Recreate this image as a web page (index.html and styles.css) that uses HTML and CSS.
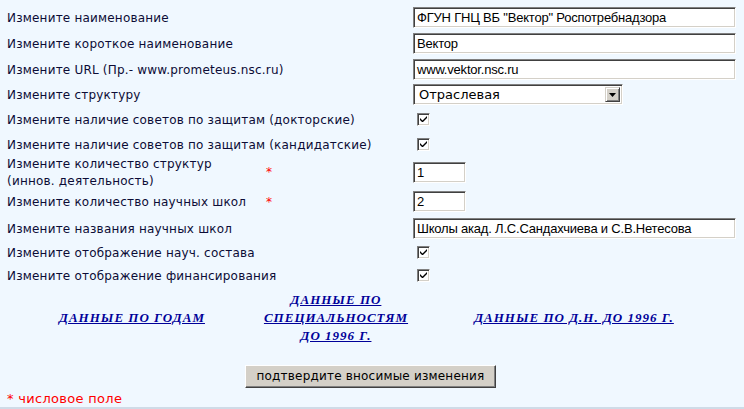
FILE: index.html
```html
<!DOCTYPE html>
<html lang="ru">
<head>
<meta charset="utf-8">
<title>Изменение данных</title>
<link rel="stylesheet" href="styles.css">
</head>
<body>
<form class="form">
  <div class="grid">
    <div class="lbl">Измените наименование</div><div class="req"></div>
    <div class="fld"><span class="inp wide">ФГУН ГНЦ ВБ "Вектор" Роспотребнадзора</span></div>

    <div class="lbl">Измените короткое наименование</div><div class="req"></div>
    <div class="fld"><span class="inp wide">Вектор</span></div>

    <div class="lbl">Измените URL (Пр.- www.prometeus.nsc.ru)</div><div class="req"></div>
    <div class="fld"><span class="inp wide">www.vektor.nsc.ru</span></div>

    <div class="lbl">Измените структуру</div><div class="req"></div>
    <div class="fld"><span class="sel"><span class="sel-text">Отраслевая</span><span class="sel-btn"><svg width="7" height="4" viewBox="0 0 7 4"><path d="M0 0h7L3.5 4z" fill="#000"/></svg></span></span></div>

    <div class="lbl">Измените наличие советов по защитам (докторские)</div><div class="req"></div>
    <div class="fld"><span class="chk"><svg width="9" height="9" viewBox="0 0 9 9"><path d="M1 3v2l2 2h1l4-4V1L3.5 5.5z" fill="#000"/></svg></span></div>

    <div class="lbl">Измените наличие советов по защитам (кандидатские)</div><div class="req"></div>
    <div class="fld"><span class="chk"><svg width="9" height="9" viewBox="0 0 9 9"><path d="M1 3v2l2 2h1l4-4V1L3.5 5.5z" fill="#000"/></svg></span></div>

    <div class="lbl">Измените количество структур<br>(иннов. деятельность)</div><div class="req">*</div>
    <div class="fld"><span class="inp short">1</span></div>

    <div class="lbl">Измените количество научных школ</div><div class="req">*</div>
    <div class="fld"><span class="inp short">2</span></div>

    <div class="lbl">Измените названия научных школ</div><div class="req"></div>
    <div class="fld"><span class="inp wide">Школы акад. Л.С.Сандахчиева и С.В.Нетесова</span></div>

    <div class="lbl">Измените отображение науч. состава</div><div class="req"></div>
    <div class="fld"><span class="chk"><svg width="9" height="9" viewBox="0 0 9 9"><path d="M1 3v2l2 2h1l4-4V1L3.5 5.5z" fill="#000"/></svg></span></div>

    <div class="lbl">Измените отображение финансирования</div><div class="req"></div>
    <div class="fld"><span class="chk"><svg width="9" height="9" viewBox="0 0 9 9"><path d="M1 3v2l2 2h1l4-4V1L3.5 5.5z" fill="#000"/></svg></span></div>
  </div>

  <div class="links">
    <div class="lnk-cell"><a href="#" class="lnk">ДАННЫЕ ПО ГОДАМ</a></div>
    <div class="lnk-cell mid"><a href="#" class="lnk">ДАННЫЕ ПО СПЕЦИАЛЬНОСТЯМ ДО 1996 Г.</a></div>
    <div class="lnk-cell"><a href="#" class="lnk">ДАННЫЕ ПО Д.Н. ДО 1996 Г.</a></div>
  </div>

  <div class="submit-row"><span class="btn">подтвердите вносимые изменения</span></div>

  <div class="note">* числовое поле</div>
</form>
</body>
</html>
```

FILE: styles.css
```css
html, body {
  margin: 0;
  padding: 0;
  background: #f0f8ff;
}
body {
  font-family: "DejaVu Sans", Verdana, sans-serif;
  font-size: 12px;
  color: #0c0c36;
}
.form {
  padding: 5px 0 0 7px;
  height: 409px;
  box-sizing: border-box;
  border-bottom: 2px solid #cfdbe7;
  width: 744px;
  display: flex;
  flex-direction: column;
}
.grid {
  display: grid;
  grid-template-columns: 255px 151px 1fr;
  grid-template-rows: 25px 26px 26px 25px 24px 26px 30px 29px 25px 23px 23px;
  align-items: center;
}
.lbl {
  line-height: 17px;
  white-space: nowrap;
  letter-spacing: 0.2px;
  padding-top: 2px;
}
.req {
  color: #ff0000;
  font-size: 12px;
  padding-left: 4px;
}
.fld {
  display: flex;
  align-items: center;
}
.inp {
  display: inline-block;
  box-sizing: border-box;
  height: 21px;
  border: 1px solid;
  border-color: #808080 #ffffff #ffffff #808080;
  box-shadow: inset 1px 1px 0 #404040, inset -1px -1px 0 #d4d0c8;
  background: #fff;
  font-family: "Liberation Sans", Arial, sans-serif;
  font-size: 13px;
  letter-spacing: -0.2px;
  line-height: 20px;
  padding: 0 3px;
  color: #000;
  white-space: nowrap;
  overflow: hidden;
}
.wide { width: 323px; }
.short { width: 53px; }
.sel {
  display: inline-flex;
  box-sizing: border-box;
  width: 210px;
  height: 21px;
  border: 1px solid;
  border-color: #808080 #ffffff #ffffff #808080;
  box-shadow: inset 1px 1px 0 #404040, inset -1px -1px 0 #d4d0c8;
  background: #fff;
  padding: 2px;
  align-items: stretch;
}
.sel-text {
  flex: 1;
  padding-left: 3px;
  line-height: 15px;
  color: #000;
  font-size: 13px;
}
.sel-btn {
  width: 15px;
  box-sizing: border-box;
  background: #d4d0c8;
  border: 1px solid;
  border-color: #d4d0c8 #404040 #404040 #d4d0c8;
  box-shadow: inset 1px 1px 0 #fff, inset -1px -1px 0 #808080;
  display: flex;
  align-items: center;
  justify-content: center;
}
.chk {
  margin-left: 4px;
  box-sizing: border-box;
  width: 13px;
  height: 13px;
  border: 1px solid;
  border-color: #808080 #ffffff #ffffff #808080;
  box-shadow: inset 1px 1px 0 #404040, inset -1px -1px 0 #d4d0c8;
  background: #fff;
  display: flex;
  align-items: center;
  justify-content: center;
}
.chk svg { display: block; }
.links {
  display: grid;
  grid-template-columns: 250px 158px 318px;
  margin-left: -7px;
  padding-left: 7px;
  margin-top: 2px;
  align-items: center;
  height: 58px;
}
.lnk-cell {
  text-align: center;
  line-height: 17px;
}
.mid { padding: 0 2px; }
.lnk {
  font-family: "Liberation Serif", "Times New Roman", serif;
  font-weight: bold;
  font-style: italic;
  font-size: 13px;
  letter-spacing: 1px;
  color: #000099;
  text-decoration: underline;
}
.submit-row {
  padding-left: 238px;
  margin-top: 19px;
  line-height: 0;
}
.btn {
  display: inline-block;
  box-sizing: border-box;
  width: 251px;
  height: 23px;
  background: #d4d0c8;
  border: 1px solid;
  border-color: #ffffff #404040 #404040 #ffffff;
  box-shadow: inset -1px -1px 0 #808080;
  text-align: center;
  line-height: 20px;
  font-size: 12px;
  letter-spacing: 0.2px;
  color: #000;
}
.note {
  color: #ff0000;
  margin-top: 3px;
  font-size: 13px;
  line-height: 16px;
  letter-spacing: 0.3px;
}
```
